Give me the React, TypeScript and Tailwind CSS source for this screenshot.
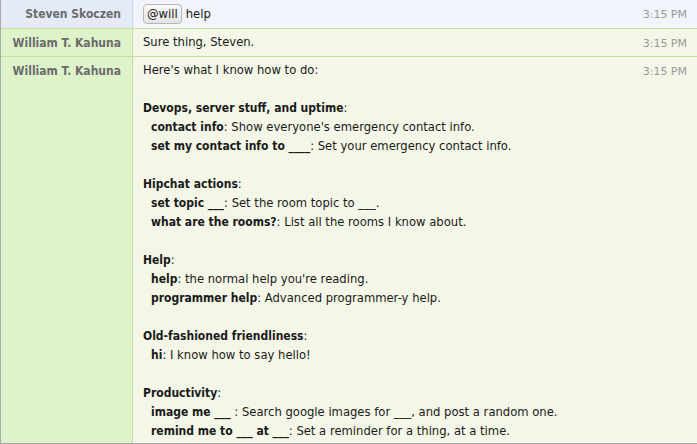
type Row = {
  name: string;
  time: string;
  kind: "self" | "bot";
  body: React.ReactNode;
};

const boldFont = { fontFamily: '"DejaVu Sans Condensed", "DejaVu Sans", sans-serif', fontWeight: 700 };

function B({ children }: { children: React.ReactNode }) {
  return (
    <b className="text-[12px]" style={boldFont}>
      {children}
    </b>
  );
}

function Cmd({ k, d }: { k: string; d: string }) {
  return (
    <div className="pl-[8px]">
      <B>{k}</B>: {d}
    </div>
  );
}

function Section({ title, children }: { title: string; children: React.ReactNode }) {
  return (
    <div className="mt-[19px]">
      <div>
        <B>{title}</B>:
      </div>
      {children}
    </div>
  );
}

const rows: Row[] = [
  {
    name: "Steven Skoczen",
    time: "3:15 PM",
    kind: "self",
    body: (
      <span className="flex items-center gap-[4px]">
        <span className="rounded-[4px] border border-[#b5b5b5] bg-gradient-to-b from-[#fafafa] to-[#e4e4e4] px-[3px] leading-[18px]">
          @will
        </span>
        help
      </span>
    ),
  },
  {
    name: "William T. Kahuna",
    time: "3:15 PM",
    kind: "bot",
    body: <span>Sure thing, Steven.</span>,
  },
  {
    name: "William T. Kahuna",
    time: "3:15 PM",
    kind: "bot",
    body: (
      <div>
        <div>Here's what I know how to do:</div>
        <Section title="Devops, server stuff, and uptime">
          <Cmd k="contact info" d="Show everyone's emergency contact info." />
          <Cmd k="set my contact info to ____" d="Set your emergency contact info." />
        </Section>
        <Section title="Hipchat actions">
          <Cmd k="set topic ___" d="Set the room topic to ___." />
          <Cmd k="what are the rooms?" d="List all the rooms I know about." />
        </Section>
        <Section title="Help">
          <Cmd k="help" d="the normal help you're reading." />
          <Cmd k="programmer help" d="Advanced programmer-y help." />
        </Section>
        <Section title="Old-fashioned friendliness">
          <Cmd k="hi" d="I know how to say hello!" />
        </Section>
        <Section title="Productivity">
          <div className="pl-[8px]">
            <B>image me ___ </B> : Search google images for ___, and post a random one.
          </div>
          <Cmd k="remind me to ___ at ___" d="Set a reminder for a thing, at a time." />
        </Section>
      </div>
    ),
  },
];

export default function App() {
  return (
    <div
      className="w-[697px] h-[444px] overflow-hidden border-l border-b border-[#a9a9a9] flex flex-col text-[11.6px] text-[#1a1a1a]"
      style={{ fontFamily: '"DejaVu Sans", "Liberation Sans", sans-serif' }}
    >
      {rows.map((r, i) => {
        const self = r.kind === "self";
        const last = i === rows.length - 1;
        return (
          <div
            key={i}
            className={`flex ${last ? "flex-1" : ""} ${i > 0 ? "border-t border-[#c3e09a]" : ""}`}
          >
            <div
              className={`w-[132px] shrink-0 text-right pr-[11px] text-[12px] text-[#6b6b6b] border-r ${
                self ? "bg-[#e4ebf7] border-[#c8d8ee] pt-[5px]" : "bg-[#dff3cb] border-[#c3e09a] pt-[5px]"
              }`}
              style={boldFont}
            >
              {r.name}
            </div>
            <div
              className={`flex-1 flex justify-between pl-[10px] pr-[10px] leading-[19px] ${
                self ? "bg-[#f1f5fb] pt-[4px] pb-[4px]" : "bg-[#f4f7e8] pt-[4px] pb-[3px]"
              }`}
            >
              <div>{r.body}</div>
              <div className="text-[11px] text-[#999] pt-[1px]">{r.time}</div>
            </div>
          </div>
        );
      })}
    </div>
  );
}
